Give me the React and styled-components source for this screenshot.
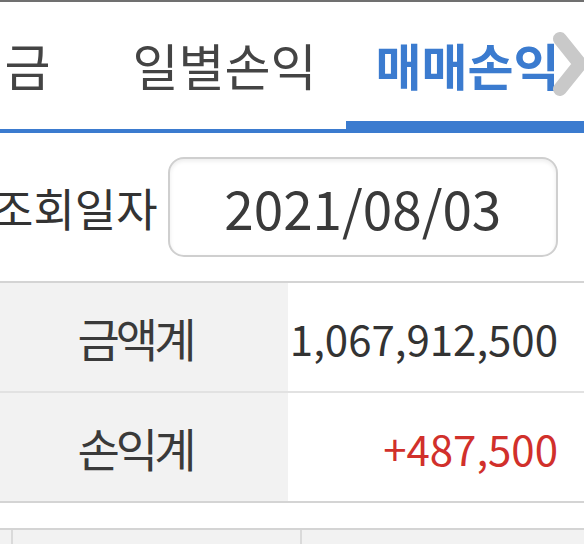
import styled, { createGlobalStyle } from 'styled-components';

const blue = '#3b7bcf';
const line = '#d4d4d4';
const labelBg = '#f2f2f2';

const tabs = [
  { label: '증거금', active: false },
  { label: '일별손익', active: false },
  { label: '매매손익', active: true },
];

const summary = [
  { label: '금액계', value: '1,067,912,500', tone: 'plain' },
  { label: '손익계', value: '+487,500', tone: 'up' },
];

function App() {
  return (
    <Page>
      <GlobalStyle />
      <TabBar>
        <TabStrip>
          {tabs.map((t) => (
            <Tab key={t.label} active={t.active}>
              {t.label}
            </Tab>
          ))}
        </TabStrip>
        <ScrollHint viewBox="0 0 34 64" aria-hidden="true">
          <polyline
            points="8,7 28,32 8,57"
            fill="none"
            stroke="#c9c9c9"
            strokeWidth="14"
            strokeLinecap="round"
            strokeLinejoin="round"
          />
        </ScrollHint>
      </TabBar>

      <DateRow>
        <DateLabel>조회일자</DateLabel>
        <DateBox>2021/08/03</DateBox>
      </DateRow>

      <Summary>
        {summary.map((row) => (
          <SummaryRow key={row.label}>
            <LabelCell>{row.label}</LabelCell>
            <ValueCell tone={row.tone}>{row.value}</ValueCell>
          </SummaryRow>
        ))}
      </Summary>

      <ListHead>
        <HeadCell />
        <HeadCell />
        <HeadCell />
      </ListHead>
    </Page>
  );
}

const GlobalStyle = createGlobalStyle`
  html, body {
    margin: 0;
    padding: 0;
    background: #ffffff;
    overflow: hidden;
  }
  body {
    font-family: "Noto Sans CJK KR", "Noto Sans", sans-serif;
    color: #333333;
  }
`;

const Page = styled.div`
  position: relative;
  width: 584px;
  height: 544px;
  overflow: hidden;
  background: #ffffff;
`;

const TabBar = styled.div`
  position: relative;
  height: 127px;
  border-top: 2px solid #707070;
  border-bottom: 4px solid ${blue};
`;

const TabStrip = styled.div`
  display: flex;
  height: 100%;
  margin-left: -140px;
`;

const Tab = styled.div`
  flex: 0 0 243px;
  display: flex;
  align-items: center;
  justify-content: center;
  padding-bottom: 4px;
  box-sizing: border-box;
  font-size: 50px;
  line-height: 1;
  white-space: nowrap;
  color: ${(p) => (p.active ? blue : '#444444')};
  font-weight: ${(p) => (p.active ? 700 : 400)};
  box-shadow: ${(p) => (p.active ? `inset 0 -8px 0 ${blue}` : 'none')};
`;

const ScrollHint = styled.svg`
  position: absolute;
  left: 552px;
  top: 30px;
  width: 34px;
  height: 64px;
`;

const DateRow = styled.div`
  display: flex;
  align-items: center;
  gap: 10px;
  padding: 24px 26px 0 0;
  margin-left: -8px;
`;

const DateLabel = styled.div`
  font-size: 45px;
  line-height: 1;
  white-space: nowrap;
  color: #333333;
`;

const DateBox = styled.div`
  flex: 1;
  height: 96px;
  display: flex;
  align-items: center;
  justify-content: center;
  border: 2px solid #cfcfcf;
  border-radius: 16px;
  box-shadow: inset 0 2px 4px rgba(0, 0, 0, 0.08);
  font-size: 53px;
  line-height: 1;
  color: #3a3a3a;
`;

const Summary = styled.div`
  margin-top: 24px;
  border-top: 2px solid ${line};
  border-bottom: 2px solid ${line};
`;

const SummaryRow = styled.div`
  display: grid;
  grid-template-columns: 288px 1fr;
  height: 108px;
  & + & {
    border-top: 2px solid #e2e2e2;
  }
`;

const LabelCell = styled.div`
  display: flex;
  align-items: center;
  justify-content: center;
  padding-right: 18px;
  background: ${labelBg};
  font-size: 46px;
  letter-spacing: -4px;
  color: #3a3a3a;
`;

const ValueCell = styled.div`
  display: flex;
  align-items: center;
  justify-content: flex-end;
  padding-right: 26px;
  font-size: 42px;
  color: ${(p) => (p.tone === 'up' ? '#d1302b' : '#333333')};
`;

const ListHead = styled.div`
  display: grid;
  grid-template-columns: 11px 289px 1fr;
  margin-top: 25px;
  height: 60px;
  border-top: 2px solid ${line};
  background: ${labelBg};
`;

const HeadCell = styled.div`
  & + & {
    border-left: 2px solid #dadada;
  }
`;

export default App;
